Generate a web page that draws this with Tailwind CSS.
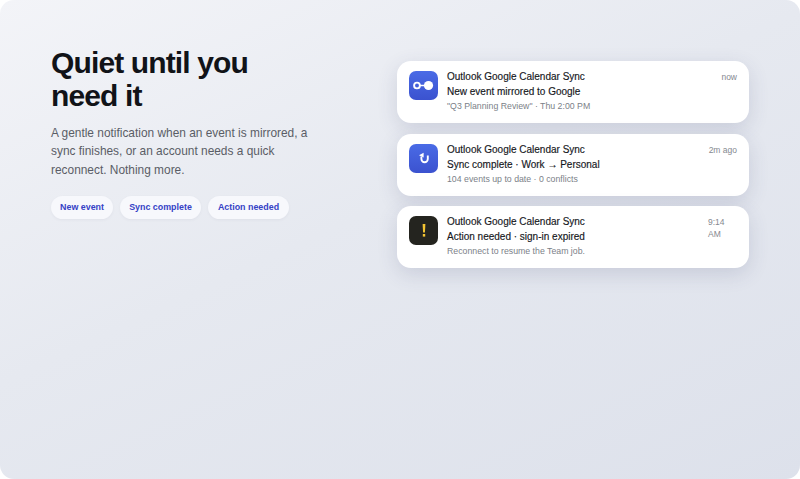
<!DOCTYPE html>
<html lang="en">
<head>
    <meta charset="UTF-8">
    <title>Quiet until you need it</title>
    <script src="https://cdn.jsdelivr.net/npm/@tailwindcss/browser@4"></script>
</head>
<body class="w-[800px] h-[479px] overflow-hidden bg-white font-['Liberation_Sans',sans-serif]">
    <div class="h-full rounded-[14px] bg-[linear-gradient(155deg,#f3f4f8_0%,#e6e9f0_45%,#dde1eb_100%)] flex items-start justify-between pt-[46px] pl-[51px] pr-[51px]">
        <!-- Left copy -->
        <div class="w-[270px]">
            <h1 class="text-[30px] leading-[33px] font-bold tracking-[-0.87px] text-[#111318]">Quiet until you need it</h1>
            <p class="mt-[11.7px] text-[11.9px] leading-[18.6px] text-[#5a5d66]">A gentle notification when an event is mirrored, a sync finishes, or an account needs a quick reconnect. Nothing more.</p>
            <div class="mt-[16.5px] flex gap-[7px]">
                <span class="h-[23px] w-[62px] flex items-center justify-center rounded-full bg-[#f7f8fc] shadow-[0_1px_3px_rgba(60,70,110,0.06)] text-[8.9px] font-bold text-[#3442c6]">New event</span>
                <span class="h-[23px] w-[81px] flex items-center justify-center rounded-full bg-[#f7f8fc] shadow-[0_1px_3px_rgba(60,70,110,0.06)] text-[8.9px] font-bold text-[#3442c6]">Sync complete</span>
                <span class="h-[23px] w-[81px] flex items-center justify-center rounded-full bg-[#f7f8fc] shadow-[0_1px_3px_rgba(60,70,110,0.06)] text-[8.9px] font-bold text-[#3442c6]">Action needed</span>
            </div>
        </div>

        <!-- Notifications -->
        <div class="w-[352px] mt-[15px] flex flex-col gap-[10.5px]">
            <div class="h-[62px] rounded-[14px] bg-white shadow-[0_6px_20px_rgba(60,70,110,0.16)] flex items-start pt-[10px] pl-[12px] pr-[12px]">
                <div class="w-[29px] h-[29px] shrink-0 rounded-[7px] bg-[linear-gradient(180deg,#4a6be6,#3b52cf)] flex items-center justify-center">
                    <svg width="21" height="11" viewBox="0 0 21 11" fill="none"><circle cx="4" cy="5.5" r="2.9" stroke="white" stroke-width="1.9"/><path d="M6.5 5.5h8" stroke="white" stroke-width="1.5"/><circle cx="15.5" cy="5.5" r="4.6" fill="white"/></svg>
                </div>
                <div class="ml-[9px] flex-1 min-w-0">
                    <div class="text-[10px] leading-[12px] font-medium text-[#15171c] [-webkit-text-stroke:0.15px_#15171c]">Outlook Google Calendar Sync</div>
                    <div class="text-[10px] leading-[12px] font-medium text-[#15171c] [-webkit-text-stroke:0.15px_#15171c] mt-[3px]">New event mirrored to Google</div>
                    <div class="text-[8.75px] leading-[12px] text-[#7b7f88] mt-[2px]">"Q3 Planning Review" · Thu 2:00 PM</div>
                </div>
                <div class="text-[8.5px] leading-[12px] text-[#85888f] shrink-0">now</div>
            </div>

            <div class="h-[62px] rounded-[14px] bg-white shadow-[0_6px_20px_rgba(60,70,110,0.16)] flex items-start pt-[10px] pl-[12px] pr-[12px]">
                <div class="w-[29px] h-[29px] shrink-0 rounded-[7px] bg-[linear-gradient(180deg,#4a6be6,#3b52cf)] flex items-center justify-center">
                    <svg width="12" height="12" viewBox="0 0 12 12" fill="none"><path d="M3.4 4.6V7a3.2 3.2 0 0 0 6.4 0V3.6" stroke="white" stroke-width="1.9"/><path d="M1 3.2 5.6 .8v4.8z" fill="white"/></svg>
                </div>
                <div class="ml-[9px] flex-1 min-w-0">
                    <div class="text-[10px] leading-[12px] font-medium text-[#15171c] [-webkit-text-stroke:0.15px_#15171c]">Outlook Google Calendar Sync</div>
                    <div class="text-[10px] leading-[12px] font-medium text-[#15171c] [-webkit-text-stroke:0.15px_#15171c] mt-[3px]">Sync complete · Work → Personal</div>
                    <div class="text-[8.75px] leading-[12px] text-[#7b7f88] mt-[2px]">104 events up to date · 0 conflicts</div>
                </div>
                <div class="text-[8.5px] leading-[12px] text-[#85888f] shrink-0">2m ago</div>
            </div>

            <div class="h-[62px] rounded-[14px] bg-white shadow-[0_6px_20px_rgba(60,70,110,0.16)] flex items-start pt-[10px] pl-[12px] pr-[12px]">
                <div class="w-[29px] h-[29px] shrink-0 rounded-[7px] bg-[#24241f] flex items-center justify-center">
                    <svg width="4" height="13" viewBox="0 0 4 13"><path d="M.6 0h2.8l-.5 8.6H1.1z" fill="#f3c432"/><rect x=".8" y="10" width="2.4" height="2.6" fill="#f3c432"/></svg>
                </div>
                <div class="ml-[9px] flex-1 min-w-0">
                    <div class="text-[10px] leading-[12px] font-medium text-[#15171c] [-webkit-text-stroke:0.15px_#15171c]">Outlook Google Calendar Sync</div>
                    <div class="text-[10px] leading-[12px] font-medium text-[#15171c] [-webkit-text-stroke:0.15px_#15171c] mt-[3px]">Action needed · sign-in expired</div>
                    <div class="text-[8.75px] leading-[12px] text-[#7b7f88] mt-[2px]">Reconnect to resume the Team job.</div>
                </div>
                <div class="w-[29px] text-[8.5px] leading-[12px] text-[#85888f] shrink-0">9:14 AM</div>
            </div>
        </div>
    </div>
</body>
</html>
